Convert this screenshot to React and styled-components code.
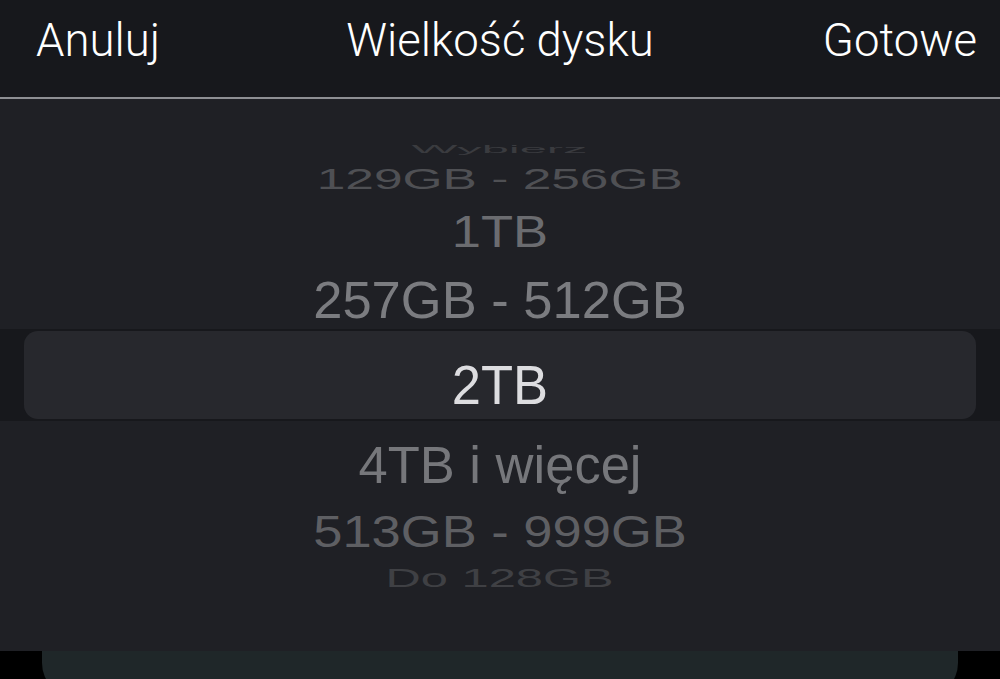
import React, { useState } from 'react'
import styled, { createGlobalStyle } from 'styled-components'

const GlobalStyle = createGlobalStyle`
  html, body {
    margin: 0;
    padding: 0;
    background: #000;
  }
  body {
    font-family: "Liberation Sans", Arial, sans-serif;
  }
`

// rows above and below the selected one, with the wheel's squash per row
const above = [
  { label: 'Wybierz', h: 30, sy: 0.19, sx: 0.93, color: '#3a3b3f' },
  { label: '129GB - 256GB', h: 28, sy: 0.56, sx: 0.98, color: '#4f5054' },
  { label: '1TB', h: 78, sy: 0.83, sx: 1, color: '#6b6c70' },
  { label: '257GB - 512GB', h: 58, sy: 0.98, sx: 1, color: '#7b7c80' },
]

const below = [
  { label: '4TB i więcej', h: 88, sy: 0.98, sx: 1, color: '#76777b' },
  { label: '513GB - 999GB', h: 46, sy: 0.83, sx: 1, color: '#5e5f63' },
  { label: 'Do 128GB', h: 46, sy: 0.5, sx: 0.93, color: '#3f4044' },
]

const App = () => {
  const [selected] = useState('2TB')

  return (
    <>
      <GlobalStyle />
      <Screen>
        <Header>
          <HeaderButton>Anuluj</HeaderButton>
          <Title>Wielkość dysku</Title>
          <HeaderButton $right>Gotowe</HeaderButton>
        </Header>
        <Divider />
        <Wheel>
          <Upper>
            {above.map(row => (
              <Row key={row.label} $h={row.h}>
                <Option $sx={row.sx} $sy={row.sy} $color={row.color}>{row.label}</Option>
              </Row>
            ))}
          </Upper>
          <Band>
            <Selection>
              <Option $sx={1} $sy={1.04} $color="#dddde0">{selected}</Option>
            </Selection>
          </Band>
          <Lower>
            {below.map(row => (
              <Row key={row.label} $h={row.h}>
                <Option $sx={row.sx} $sy={row.sy} $color={row.color}>{row.label}</Option>
              </Row>
            ))}
          </Lower>
        </Wheel>
        <Behind>
          <Card />
        </Behind>
      </Screen>
    </>
  )
}

export default App

const Screen = styled.div`
  width: 1000px;
  height: 679px;
  overflow: hidden;
  display: flex;
  flex-direction: column;
  background: #000;
`

const Header = styled.div`
  flex: none;
  height: 97px;
  box-sizing: border-box;
  padding: 18px 23px 0;
  background: #17181c;
  display: grid;
  grid-template-columns: 1fr auto 1fr;
  align-items: start;
  font-family: Roboto, "Liberation Sans", sans-serif;
  font-weight: 300;
`

const HeaderButton = styled.div`
  color: #fff;
  font-size: 45.5px;
  line-height: 46px;
  text-align: ${p => (p.$right ? 'right' : 'left')};
  padding-left: ${p => (p.$right ? 0 : 13)}px;
`

const Title = styled.div`
  color: #fff;
  font-size: 45.5px;
  line-height: 46px;
  text-align: center;
`

const Divider = styled.div`
  flex: none;
  height: 2px;
  background: #8e8f93;
`

const Wheel = styled.div`
  flex: none;
  height: 552px;
  background: #1f2025;
  display: flex;
  flex-direction: column;
`

const Upper = styled.div`
  height: 230px;
  box-sizing: border-box;
  padding-top: 36px;
  display: flex;
  flex-direction: column;
`

const Lower = styled.div`
  height: 230px;
  display: flex;
  flex-direction: column;
`

const Row = styled.div`
  height: ${p => p.$h}px;
  flex: none;
  display: flex;
  align-items: center;
  justify-content: center;
`

const Option = styled.span`
  display: inline-block;
  font-size: 52.5px;
  line-height: 52px;
  color: ${p => p.$color};
  white-space: nowrap;
  transform: scale(${p => p.$sx}, ${p => p.$sy});
`

const Band = styled.div`
  height: 92px;
  box-sizing: border-box;
  padding: 2px 24px;
  background: #17181c;
  display: flex;
`

const Selection = styled.div`
  flex: 1;
  border-radius: 14px;
  background: #27282d;
  display: flex;
  align-items: center;
  justify-content: center;
  padding-top: 20px;
  box-sizing: border-box;
`

const Behind = styled.div`
  flex: 1;
  min-height: 0;
  overflow: hidden;
  padding: 0 42px;
  display: flex;
  align-items: flex-start;
`

const Card = styled.div`
  flex: 1;
  height: 46px;
  background: #1f2729;
  border-radius: 0 0 34px 34px;
`
